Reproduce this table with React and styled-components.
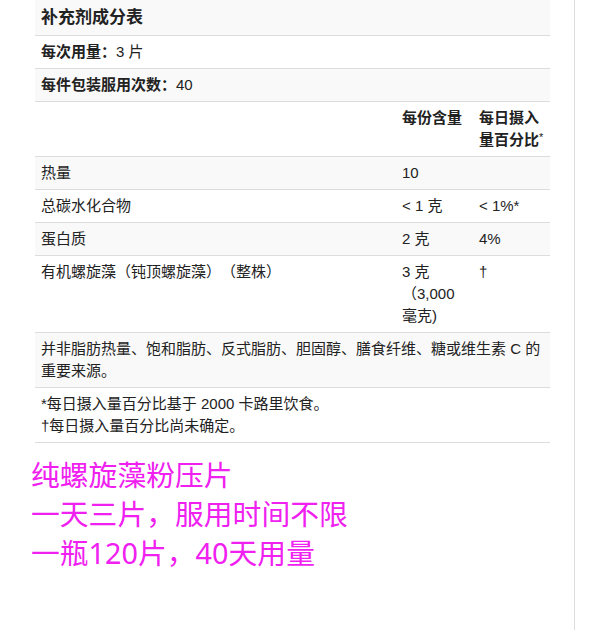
import styled, { createGlobalStyle } from "styled-components";

const Global = createGlobalStyle`
  body {
    margin: 0;
    background: #fff;
    font-family: "Liberation Sans", "Noto Sans CJK SC", sans-serif;
  }
`;

const Page = styled.div`
  width: 575px;
  min-height: 630px;
  border-right: 1px solid #ddd;
  box-sizing: border-box;
  padding-left: 35px;
`;

const Table = styled.table`
  width: 515px;
  border-collapse: collapse;
  table-layout: fixed;
  color: #222;
  font-size: 15px;
  line-height: 22px;
  text-spacing-trim: space-all;
`;

const Row = styled.tr`
  background: ${(p) => (p.$shade ? "#f9f9f9" : "#fff")};
  border-bottom: 1px solid #ddd;
`;

const Cell = styled.td`
  padding: 5px 6px;
  vertical-align: top;
  text-align: left;
  font-weight: ${(p) => (p.$bold ? 700 : 400)};
`;

const Title = styled.th`
  padding: 5px 6px;
  text-align: left;
  font-size: 17px;
  line-height: 25px;
  font-weight: 700;
`;

const Mark = styled.sup`
  font-size: 11px;
  line-height: 0;
  vertical-align: 4px;
  font-weight: 400;
`;

const Note = styled.div`
  margin-top: 12px;
  margin-left: -4px;
  color: #f020f0;
  font-family: "Noto Sans", "Noto Sans CJK SC", sans-serif;
  font-size: 28.8px;
  line-height: 39px;
`;

const nutrients = [
  { name: "热量", amount: "10", daily: "" },
  { name: "总碳水化合物", amount: "< 1 克", daily: "< 1%*" },
  { name: "蛋白质", amount: "2 克", daily: "4%" },
  { name: "有机螺旋藻（钝顶螺旋藻）（整株）", amount: "3 克 （3,000 毫克)", daily: "†" },
];

export default function App() {
  return (
    <Page>
      <Global />
      <Table>
        <colgroup>
          <col style={{ width: 361 }} />
          <col style={{ width: 77 }} />
          <col style={{ width: 77 }} />
        </colgroup>
        <thead>
          <Row $shade>
            <Title colSpan={3}>补充剂成分表</Title>
          </Row>
        </thead>
        <tbody>
          <Row>
            <Cell colSpan={3}>
              <b>每次用量：</b>3 片
            </Cell>
          </Row>
          <Row $shade>
            <Cell colSpan={3}>
              <b>每件包装服用次数：</b>40
            </Cell>
          </Row>
          <Row>
            <Cell />
            <Cell $bold>每份含量</Cell>
            <Cell $bold>
              每日摄入量百分比<Mark>*</Mark>
            </Cell>
          </Row>
          {nutrients.map((n, i) => (
            <Row key={n.name} $shade={i % 2 === 0}>
              <Cell>{n.name}</Cell>
              <Cell>{n.amount}</Cell>
              <Cell>{n.daily}</Cell>
            </Row>
          ))}
          <Row $shade>
            <Cell colSpan={3}>
              并非脂肪热量、饱和脂肪、反式脂肪、胆固醇、膳食纤维、糖或维生素 C 的重要来源。
            </Cell>
          </Row>
          <Row>
            <Cell colSpan={3}>
              *每日摄入量百分比基于 2000 卡路里饮食。
              <br />
              †每日摄入量百分比尚未确定。
            </Cell>
          </Row>
        </tbody>
      </Table>
      <Note>
        纯螺旋藻粉压片
        <br />
        一天三片，服用时间不限
        <br />
        一瓶120片，40天用量
      </Note>
    </Page>
  );
}
